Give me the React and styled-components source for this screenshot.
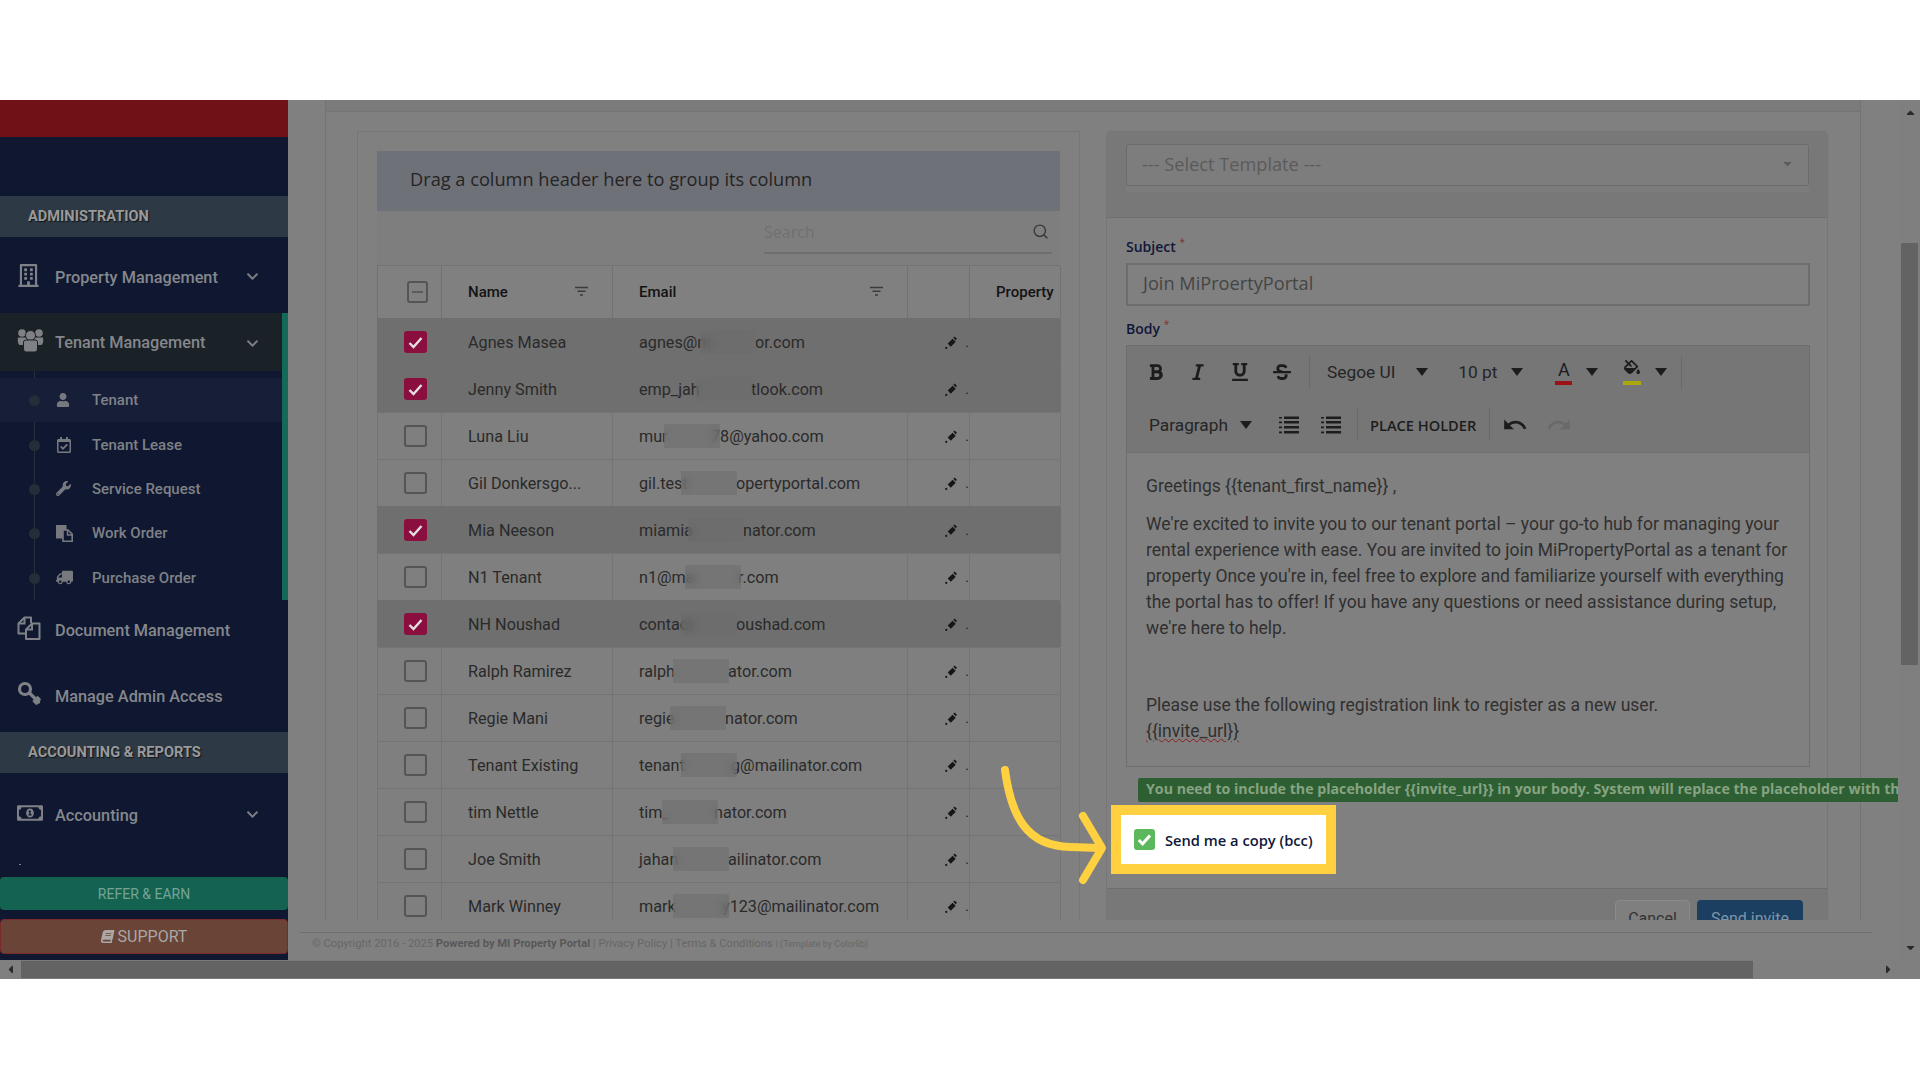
import React from 'react';
import styled, { createGlobalStyle } from 'styled-components';
import {
  FaChevronDown,
  FaRegBuilding,
  FaUser,
  FaRegCalendarCheck,
  FaWrench,
  FaTruck,
  FaRegMoneyBillAlt,
  FaBook,
  FaBold,
  FaItalic,
  FaUnderline,
  FaStrikethrough,
  FaFillDrip,
  FaCaretDown,
  FaCaretUp,
  FaCaretLeft,
  FaCaretRight,
} from 'react-icons/fa';
import { MdUndo, MdRedo } from 'react-icons/md';
import { LuSearch } from 'react-icons/lu';

const people = [
  { name: 'Agnes Masea', start: 'agnes@m', end: 'or.com', left: 61, selected: true },
  { name: 'Jenny Smith', start: 'emp_jah', end: 'tlook.com', left: 57, selected: true },
  { name: 'Luna Liu', start: 'mur', end: '78@yahoo.com', left: 25, back: 9 },
  { name: 'Gil Donkersgo...', start: 'gil.test', end: 'opertyportal.com', left: 42 },
  { name: 'Mia Neeson', start: 'miamia', end: 'nator.com', left: 49, selected: true },
  { name: 'N1 Tenant', start: 'n1@ma', end: 'r.com', left: 46, back: 3 },
  { name: 'NH Noushad', start: 'contact', end: 'oushad.com', left: 42, selected: true },
  { name: 'Ralph Ramirez', start: 'ralph', end: 'ator.com', left: 34 },
  { name: 'Regie Mani', start: 'regie', end: 'nator.com', left: 31 },
  { name: 'Tenant Existing', start: 'tenant', end: 'g@mailinator.com', left: 42, back: 6 },
  { name: 'tim Nettle', start: 'tim_', end: 'nator.com', left: 23, back: 4 },
  { name: 'Joe Smith', start: 'jahan', end: 'ailinator.com', left: 34 },
  { name: 'Mark Winney', start: 'mark', end: 'y123@mailinator.com', left: 34, back: 7 },
];

const FlippedTruck = styled(FaTruck)`
  transform: scaleX(-1);
`;

const DocsIcon = () => (
  <svg width="24" height="24" viewBox="0 0 24 24" fill="none" stroke="#7f8186" strokeWidth="2">
    <path d="M9 17.5 H1.5 V7.5 L7.5 1.5 H14 V7" strokeLinejoin="round" />
    <path d="M7.5 1.5 V7.5 H1.5" />
    <path d="M15 7.5 H22.5 V23 H9 V13.5 Z" strokeLinejoin="round" />
    <path d="M15 7.5 V13.5 H9" />
  </svg>
);

const KeyIcon = () => (
  <svg width="24" height="26" viewBox="0 0 24 26" fill="none" stroke="#7f8186" strokeLinecap="round">
    <circle cx="8" cy="8" r="5.5" strokeWidth="3.2" />
    <path d="M12.5 12 L21.5 21" strokeWidth="3.4" />
    <path d="M17 20 L19.5 22.5 M20.5 16.5 L22.5 18.5" strokeWidth="2.6" />
  </svg>
);

const UsersIcon = () => (
  <svg width="27" height="25" viewBox="0 0 27 25" fill="#7f8186">
    <circle cx="5" cy="5" r="3.8" />
    <circle cx="22" cy="5" r="3.8" />
    <path d="M1 9.5 H26 Q27 15 24.5 17 H2.5 Q0 15 1 9.5 Z" />
    <circle cx="13.5" cy="7.5" r="5" stroke="#1a2127" strokeWidth="1" />
    <path d="M6.5 14 Q6.5 12 9 12 H18 Q20.5 12 20.5 14 V21 Q20.5 24 18 24 H9 Q6.5 24 6.5 21 Z" stroke="#1a2127" strokeWidth="1" />
  </svg>
);

const WorkOrderIcon = () => (
  <svg width="17" height="17" viewBox="0 0 17 17">
    <path d="M0 0 H10.5 V5 H7 V13.5 H0 Z" fill="#77797f" />
    <path d="M7 5 H12 L16.2 9.2 V16.2 H7 Z" fill="#0f1830" stroke="#77797f" strokeWidth="1.6" />
    <path d="M11.5 5 V10 H16" fill="none" stroke="#77797f" strokeWidth="1.4" />
  </svg>
);

const subItems = [
  { label: 'Tenant', icon: <FaUser size={14} />, active: true },
  { label: 'Tenant Lease', icon: <FaRegCalendarCheck size={16} /> },
  { label: 'Service Request', icon: <FaWrench size={15} /> },
  { label: 'Work Order', icon: <WorkOrderIcon /> },
  { label: 'Purchase Order', icon: <FlippedTruck size={17} /> },
];

const App = () => {
  return (
    <Page>
      <GlobalStyle />
      <WhiteBand $height={100} />
      <Frame>
        <Main>
          <Sidebar>
            <RedStrip />
            <SectionTitle $top={59}>ADMINISTRATION</SectionTitle>
            <NavRow $height={76}>
              <NavIcon><FaRegBuilding size={23} /></NavIcon>
              <NavLabel>Property Management</NavLabel>
              <Chevron />
            </NavRow>
            <OpenGroup>
              <OpenHead>
                <NavIcon><UsersIcon /></NavIcon>
                <NavLabel>Tenant Management</NavLabel>
                <Chevron />
              </OpenHead>
              <SubList>
                {subItems.map((item) => (
                  <SubRow key={item.label} $active={item.active}>
                    <SubDot />
                    <SubIcon>{item.icon}</SubIcon>
                    <span>{item.label}</span>
                  </SubRow>
                ))}
              </SubList>
            </OpenGroup>
            <NavRow $height={56}>
              <NavIcon><DocsIcon /></NavIcon>
              <NavLabel>Document Management</NavLabel>
            </NavRow>
            <NavRow $height={76}>
              <NavIcon><KeyIcon /></NavIcon>
              <NavLabel>Manage Admin Access</NavLabel>
            </NavRow>
            <SectionTitle>ACCOUNTING &amp; REPORTS</SectionTitle>
            <NavRow $height={80}>
              <NavIcon><FaRegMoneyBillAlt size={26} /></NavIcon>
              <NavLabel>Accounting</NavLabel>
              <Chevron />
            </NavRow>
            <SideDot />
            <SideButtons>
              <ReferButton>REFER &amp; EARN</ReferButton>
              <SupportButton><TiltedBook size={13} /> SUPPORT</SupportButton>
            </SideButtons>
          </Sidebar>

          <Content>
            <ScrollArea>
              <Card>
                <CardTop />
                <CardBody>
                  <GridPanel>
                    <GroupBar>Drag a column header here to group its column</GroupBar>
                    <SearchRow>
                      <SearchBox>
                        <span>Search</span>
                        <LuSearch size={17} />
                      </SearchBox>
                    </SearchRow>
                    <HeadRow>
                      <HeadCell $check>
                        <HeadCheck><span /></HeadCheck>
                      </HeadCell>
                      <HeadCell>
                        Name
                        <FilterIcon />
                      </HeadCell>
                      <HeadCell>
                        Email
                        <FilterIcon />
                      </HeadCell>
                      <HeadCell />
                      <HeadCell $property>Property</HeadCell>
                    </HeadRow>
                    {people.map((p) => (
                      <DataRow key={p.name} $selected={p.selected}>
                        <CheckCell>
                          <RowCheck $selected={p.selected}>
                            {p.selected && (
                              <svg width="15" height="13" viewBox="0 0 15 13">
                                <path d="M1.5 7 L5.5 11 L13.5 2" fill="none" stroke="#e4e0e2" strokeWidth="2.4" />
                              </svg>
                            )}
                          </RowCheck>
                        </CheckCell>
                        <NameCell>{p.name}</NameCell>
                        <EmailCell>
                          <EmailStart $width={p.left}>{p.start}</EmailStart>
                          <BlurPatch />
                          <EmailEnd $back={p.back || 1}>{p.end}</EmailEnd>
                        </EmailCell>
                        <ActionCell>
                          <PenIcon />
                          <span>.</span>
                        </ActionCell>
                        <EmptyCell />
                      </DataRow>
                    ))}
                  </GridPanel>

                  <FormPanel>
                    <FormTop>
                      <TemplateSelect>
                        <span>--- Select Template ---</span>
                        <FaCaretDown size={13} />
                      </TemplateSelect>
                      <SelectShade />
                    </FormTop>
                    <FormBody>
                      <FieldLabel>Subject <sup>*</sup></FieldLabel>
                      <SubjectInput>Join MiProertyPortal</SubjectInput>
                      <FieldLabel $body>Body <sup>*</sup></FieldLabel>
                      <Editor>
                        <Toolbar>
                          <ToolRow>
                            <ToolIcon $left={20}><FaBold size={18} /></ToolIcon>
                            <ToolIcon $left={24}><FaItalic size={18} /></ToolIcon>
                            <ToolIcon $left={24}><FaUnderline size={18} /></ToolIcon>
                            <ToolIcon $left={24}><FaStrikethrough size={18} /></ToolIcon>
                            <ToolDivider $left={18} />
                            <ToolText $left={17}>Segoe UI</ToolText>
                            <Caret $left={21} />
                            <ToolText $left={30}>10 pt</ToolText>
                            <Caret $left={14} />
                            <ColorTool $left={32}>A</ColorTool>
                            <Caret $left={14} />
                            <FillTool $left={25}><FaFillDrip size={16} /></FillTool>
                            <Caret $left={14} />
                            <ToolDivider $left={14} />
                          </ToolRow>
                          <ToolRow>
                            <ToolText $left={22}>Paragraph</ToolText>
                            <Caret $left={12} />
                            <ListIcon $left={27} />
                            <ListIcon $left={22} />
                            <ToolDivider $left={16} />
                            <PlaceHolder>PLACE HOLDER</PlaceHolder>
                            <ToolDivider $left={13} />
                            <ToolIcon $left={12}><MdUndo size={26} /></ToolIcon>
                            <ToolIcon $left={18} $muted><MdRedo size={26} /></ToolIcon>
                          </ToolRow>
                        </Toolbar>
                        <EditorBody>
                          <p>Greetings {'{{tenant_first_name}}'} ,</p>
                          <p>
                            We're excited to invite you to our tenant portal – your go-to hub for managing your<br />
                            rental experience with ease. You are invited to join MiPropertyPortal as a tenant for<br />
                            property Once you're in, feel free to explore and familiarize yourself with everything<br />
                            the portal has to offer! If you have any questions or need assistance during setup,<br />
                            we're here to help.
                          </p>
                          <p>&nbsp;</p>
                          <p>
                            Please use the following registration link to register as a new user.<br />
                            <Misspelt>{'{{invite_url}}'}</Misspelt>
                          </p>
                        </EditorBody>
                      </Editor>
                      <NoticeBar>
                        You need to include the placeholder {'{{invite_url}}'} in your body. System will replace the placeholder with the registration link.
                      </NoticeBar>
                    </FormBody>
                    <FormFooter>
                      <CancelButton>Cancel</CancelButton>
                      <SendButton>Send invite</SendButton>
                    </FormFooter>
                  </FormPanel>
                </CardBody>
              </Card>
            </ScrollArea>
            <Footer>
              <FooterLine>
                © Copyright 2016 - 2025 <b>Powered by MI Property Portal</b> | Privacy Policy | Terms &amp; Conditions <small>| (Template by Colorlib)</small>
              </FooterLine>
            </Footer>
          </Content>

          <VScroll>
            <FaCaretUp size={13} />
            <VThumb />
            <FaCaretDown size={13} />
          </VScroll>
        </Main>
        <HScroll>
          <HButton><FaCaretLeft size={13} /></HButton>
          <HThumb />
          <HEnd><FaCaretRight size={13} /></HEnd>
        </HScroll>
      </Frame>
      <WhiteBand $height={101} />

      <CalloutArrow width="110" height="125" viewBox="0 0 110 125">
        <path d="M5 5 C11 50 26 81 70 82 L100 83" fill="none" stroke="#ffd040" strokeWidth="8" strokeLinecap="round" />
        <path d="M83 51 L102 83 L83 115" fill="none" stroke="#ffd040" strokeWidth="8" strokeLinecap="round" strokeLinejoin="round" />
      </CalloutArrow>
      <Highlight>
        <GreenCheck>
          <svg width="15" height="13" viewBox="0 0 15 13">
            <path d="M1.8 7 L5.6 10.8 L13 2.4" fill="none" stroke="#fff" strokeWidth="3" />
          </svg>
        </GreenCheck>
        <span>Send me a copy (bcc)</span>
      </Highlight>
    </Page>
  );
};

export default App;

const PenIcon = () => (
  <svg width="16" height="16" viewBox="0 0 16 16" fill="#161616">
    <path d="M8.5 4.3 L12 7.8 L6.5 13.2 L3 9.8 Z" />
    <path d="M10.7 1.8 L13.4 4.5 L12 6 L9.3 3.3 Z" />
    <circle cx="1.4" cy="14.6" r="1.2" />
  </svg>
);

const FilterIcon = () => (
  <FilterSvg width="13" height="12" viewBox="0 0 13 12">
    <path d="M0 0.7 H13 V2.2 H0 Z M2.5 4.5 H10.5 V6 H2.5 Z M5 8.3 H8 V9.8 H5 Z" fill="#3b3b3b" />
  </FilterSvg>
);

const ListIcon = ({ $left }) => (
  <ListSvg $left={$left} width="20" height="18" viewBox="0 0 20 18">
    <path d="M5 0.5 H20 V3 H5 Z M5 5 H20 V7.5 H5 Z M5 10 H20 V12.5 H5 Z M5 15 H20 V17.5 H5 Z" fill="#1c1c1c" />
    <path d="M0 1 H3 V2.6 H0 Z M0 5.6 H3 V7.2 H0 Z M0 10.6 H3 V12.2 H0 Z M0 15.6 H3 V17.2 H0 Z" fill="#1c1c1c" />
  </ListSvg>
);

const Chevron = () => (
  <ChevronWrap><FaChevronDown size={13} /></ChevronWrap>
);

const GlobalStyle = createGlobalStyle`
  html, body {
    margin: 0;
    padding: 0;
    background: #fff;
    overflow: hidden;
  }
  body {
    font-family: Roboto, "Liberation Sans", sans-serif;
  }
`;

const Page = styled.div`
  position: relative;
  width: 1920px;
  height: 1080px;
  display: flex;
  flex-direction: column;
  overflow: hidden;
`;

const WhiteBand = styled.div`
  height: ${(p) => p.$height}px;
  flex: none;
  background: #fff;
`;

const Frame = styled.div`
  flex: 1;
  display: flex;
  flex-direction: column;
  background: #808080;
  min-height: 0;
`;

const Main = styled.div`
  height: 860px;
  display: flex;
`;

const Sidebar = styled.aside`
  width: 288px;
  flex: none;
  display: flex;
  flex-direction: column;
  background: #0f1830;
  color: #85878d;
`;

const RedStrip = styled.div`
  height: 37px;
  background: #6f1116;
`;

const SectionTitle = styled.div`
  height: 41px;
  margin-top: ${(p) => p.$top || 0}px;
  padding: 0 0 2px 28px;
  box-sizing: border-box;
  display: flex;
  align-items: center;
  flex: none;
  background: #2d3945;
  color: #989a9c;
  font-size: 14.6px;
  font-weight: 700;
  text-shadow: 1px 1px 1px #141414;
`;

const NavRow = styled.div`
  height: ${(p) => p.$height}px;
  flex: none;
  display: flex;
  align-items: center;
  position: relative;
  padding-left: 18px;
`;

const NavIcon = styled.span`
  width: 37px;
  flex: none;
  display: flex;
  align-items: center;
  color: #7f8186;

  & > svg:first-child {
    margin-left: -1px;
  }
`;

const NavLabel = styled.span`
  padding-top: 4px;
  font-size: 16.3px;
  font-weight: 500;
  white-space: nowrap;
`;

const ChevronWrap = styled.span`
  position: absolute;
  left: 246px;
  top: 50%;
  margin-top: -5px;
  display: flex;
  color: #7a7c82;
`;

const OpenGroup = styled.div`
  flex: none;
  border-right: 6px solid #136a58;
`;

const OpenHead = styled.div`
  position: relative;
  height: 58px;
  box-sizing: border-box;
  display: flex;
  align-items: center;
  padding: 0 0 4px 18px;
  background: #1a2127;
`;

const SubList = styled.div`
  position: relative;
  padding-top: 7px;
  height: 229px;
  box-sizing: border-box;

  &::before {
    content: '';
    position: absolute;
    left: 34px;
    top: 0;
    bottom: 0;
    width: 1px;
    background: #262f38;
  }
`;

const SubRow = styled.div`
  height: 44.4px;
  display: flex;
  align-items: center;
  position: relative;
  padding-left: 56px;
  background: ${(p) => (p.$active ? '#161e38' : 'transparent')};
  font-size: 15px;
  font-weight: 500;
  color: #7f8187;
`;

const SubDot = styled.i`
  position: absolute;
  left: 29px;
  top: 50%;
  margin-top: -5px;
  width: 11px;
  height: 11px;
  border-radius: 50%;
  background: #232e38;
`;

const SubIcon = styled.span`
  width: 36px;
  display: flex;
  align-items: center;
  color: #77797f;
`;

const SideDot = styled.i`
  width: 2px;
  height: 1px;
  margin: 11px 0 0 19px;
  background: #7f8186;
`;

const SideButtons = styled.div`
  margin-top: auto;
  padding-bottom: 6px;
  display: flex;
  flex-direction: column;
  gap: 9px;
`;

const ReferButton = styled.div`
  height: 33px;
  display: flex;
  align-items: center;
  justify-content: center;
  background: #136350;
  border-radius: 4px;
  color: #76a398;
  font-size: 14px;
`;

const SupportButton = styled.div`
  height: 35px;
  box-sizing: border-box;
  display: flex;
  align-items: center;
  justify-content: center;
  gap: 4px;
  background: #694437;
  border: 1px solid #7a2a2a;
  border-radius: 4px;
  color: #aaa7a5;
  font-size: 16px;
`;

const TiltedBook = styled(FaBook)`
  transform: skewX(-12deg);
`;

const Content = styled.main`
  flex: 1;
  min-width: 0;
  display: flex;
  flex-direction: column;
`;

const ScrollArea = styled.div`
  height: 820px;
  flex: none;
  overflow: hidden;
  padding-left: 37px;
`;

const Card = styled.div`
  width: 1536px;
  box-sizing: border-box;
  border-left: 1px solid #737373;
  border-right: 1px solid #737373;
  height: 100%;
`;

const CardTop = styled.div`
  height: 11px;
  background: #7b7b7b;
  border-bottom: 1px solid #747474;
`;

const CardBody = styled.div`
  display: flex;
  align-items: flex-start;
  gap: 26px;
  padding: 19px 0 0 31px;
`;

const GridPanel = styled.section`
  width: 723px;
  flex: none;
  box-sizing: border-box;
  padding: 19px 19px 0;
  border: 1px solid #767676;
`;

const GroupBar = styled.div`
  height: 60px;
  box-sizing: border-box;
  display: flex;
  align-items: center;
  padding: 0 0 5px 33px;
  background: #6f7178;
  font-family: "Open Sans", sans-serif;
  font-size: 18.2px;
  color: #242424;
`;

const SearchRow = styled.div`
  height: 54px;
  display: flex;
  justify-content: flex-end;
  box-sizing: border-box;
  padding-right: 8px;
  background: #7e7e7e;
`;

const SearchBox = styled.div`
  width: 288px;
  height: 43px;
  box-sizing: border-box;
  display: flex;
  align-items: center;
  justify-content: space-between;
  padding-right: 3px;
  border-bottom: 2px solid #6e6e6e;
  font-family: "Open Sans", sans-serif;
  font-size: 16px;
  color: #707070;

  svg {
    color: #3a3a3a;
  }
`;

const columns = '64px 171px 295px 62px 92px';

const HeadRow = styled.div`
  display: grid;
  grid-template-columns: ${columns};
  height: 53px;
  border-top: 1px solid #727272;
  box-sizing: border-box;
`;

const HeadCell = styled.div`
  display: flex;
  align-items: center;
  justify-content: space-between;
  padding: ${(p) => (p.$check ? '0 0 0 29px' : p.$property ? '0 0 0 26px' : '0 24px 0 26px')};
  border-left: 1px solid #727272;
  font-size: 15px;
  font-weight: 500;
  color: #131313;
  white-space: nowrap;
  overflow: hidden;

  &:last-child {
    border-right: 1px solid #727272;
  }
`;

const FilterSvg = styled.svg`
  flex: none;
`;

const HeadCheck = styled.div`
  width: 21px;
  height: 22px;
  box-sizing: border-box;
  border: 2px solid #555;
  border-radius: 3px;
  display: flex;
  align-items: center;
  justify-content: center;

  span {
    width: 11px;
    height: 2px;
    background: #5a5a5a;
  }
`;

const DataRow = styled.div`
  display: grid;
  grid-template-columns: ${columns};
  height: 47px;
  box-sizing: border-box;
  background: ${(p) => (p.$selected ? '#6f6f6f' : '#7f7f7f')};
  border-top: 1px solid ${(p) => (p.$selected ? '#6f6f6f' : '#747474')};

  & > div {
    border-left: 1px solid ${(p) => (p.$selected ? '#6f6f6f' : '#747474')};
  }

  & > div:last-child {
    border-right: 1px solid ${(p) => (p.$selected ? '#6f6f6f' : '#747474')};
  }
`;

const CheckCell = styled.div`
  display: flex;
  align-items: center;
  padding-left: 26px;
`;

const RowCheck = styled.div`
  width: 23px;
  height: 22px;
  box-sizing: border-box;
  border-radius: 3px;
  display: flex;
  align-items: center;
  justify-content: center;
  background: ${(p) => (p.$selected ? '#8a0f3e' : 'transparent')};
  border: ${(p) => (p.$selected ? 'none' : '2px solid #555')};
`;

const NameCell = styled.div`
  display: flex;
  align-items: center;
  padding-left: 26px;
  font-size: 16.2px;
  color: #2a2a2a;
  white-space: nowrap;
`;

const EmailCell = styled.div`
  display: flex;
  align-items: center;
  padding-left: 26px;
  font-size: 16.2px;
  color: #2a2a2a;
  white-space: nowrap;
  overflow: hidden;
`;

const EmailStart = styled.span`
  width: ${(p) => p.$width}px;
  flex: none;
`;

const BlurPatch = styled.span`
  position: relative;
  z-index: 1;
  width: 56px;
  height: 24px;
  flex: none;
  backdrop-filter: blur(5px);
  background: rgba(108, 108, 108, 0.5);
`;

const EmailEnd = styled.span`
  margin-left: ${(p) => -p.$back}px;
`;

const ActionCell = styled.div`
  display: flex;
  align-items: center;
  padding-left: 37px;
  gap: 6px;
  color: #222;
  font-size: 14px;
`;

const EmptyCell = styled.div``;

const FormPanel = styled.section`
  width: 722px;
  flex: none;
  border: 1px solid #767676;
  border-radius: 4px 4px 0 0;
  box-sizing: border-box;
`;

const FormTop = styled.div`
  height: 86px;
  box-sizing: border-box;
  padding: 12px 18px 0 19px;
  background: #787878;
  border-bottom: 1px solid #6e6e6e;
`;

const TemplateSelect = styled.div`
  height: 42px;
  box-sizing: border-box;
  display: flex;
  align-items: center;
  justify-content: space-between;
  padding: 0 14px 3px 15px;
  background: #7d7d7d;
  border: 1px solid #6b6b6b;
  border-radius: 3px;
  font-family: "Open Sans", sans-serif;
  font-size: 18.2px;
  color: #5b5b5b;
`;

const SelectShade = styled.div`
  height: 6px;
  background: #7c7c7c;
`;

const FormBody = styled.div`
  padding: 0 0 0 19px;
  height: 670px;
  box-sizing: border-box;
  position: relative;
`;

const FieldLabel = styled.div`
  height: ${(p) => (p.$body ? '39px' : '45px')};
  box-sizing: border-box;
  padding-top: ${(p) => (p.$body ? '13px' : '19px')};
  font-family: "Open Sans", sans-serif;
  font-size: 14px;
  font-weight: 600;
  color: #10173a;

  sup {
    color: #7c3030;
    font-size: 10px;
    font-weight: 400;
    line-height: 0;
  }
`;

const SubjectInput = styled.div`
  width: 684px;
  height: 43px;
  box-sizing: border-box;
  display: flex;
  align-items: center;
  padding: 0 0 4px 15px;
  border: 2px solid #6e6e6e;
  font-family: "Open Sans", sans-serif;
  font-size: 18.2px;
  color: #454545;
`;

const Editor = styled.div`
  width: 684px;
  box-sizing: border-box;
  border: 1px solid #6e6e6e;
`;

const Toolbar = styled.div`
  height: 107px;
  box-sizing: border-box;
  background: #767676;
  border-bottom: 1px solid #6f6f6f;
  color: #1c1c1c;
`;

const ToolRow = styled.div`
  height: 52.5px;
  display: flex;
  align-items: center;
`;

const ToolIcon = styled.span`
  margin-left: ${(p) => p.$left}px;
  display: flex;
  color: ${(p) => (p.$muted ? '#696969' : '#1c1c1c')};
`;

const ToolDivider = styled.i`
  margin-left: ${(p) => p.$left}px;
  width: 1px;
  height: 33px;
  background: #696969;
`;

const ToolText = styled.span`
  margin-left: ${(p) => p.$left}px;
  font-size: 17.3px;
  color: #252525;
  white-space: nowrap;
`;

const Caret = styled.i`
  margin-left: ${(p) => p.$left}px;
  width: 0;
  height: 0;
  border-left: 6.5px solid transparent;
  border-right: 6.5px solid transparent;
  border-top: 8px solid #1c1c1c;
`;

const ColorTool = styled.span`
  margin-left: ${(p) => p.$left}px;
  width: 17px;
  height: 26px;
  box-sizing: border-box;
  border-bottom: 4px solid #9c1116;
  text-align: center;
  font-size: 18px;
  line-height: 21px;
`;

const FillTool = styled.span`
  margin-left: ${(p) => p.$left}px;
  width: 18px;
  height: 26px;
  box-sizing: border-box;
  border-bottom: 4px solid #a9a80f;
  display: flex;
  justify-content: center;
  overflow: hidden;
`;

const ListSvg = styled.svg`
  margin-left: ${(p) => p.$left}px;
`;

const PlaceHolder = styled.span`
  margin-left: 12px;
  font-family: "Open Sans", sans-serif;
  font-size: 14.6px;
  font-weight: 600;
  color: #1c1c1c;
  white-space: nowrap;
`;

const EditorBody = styled.div`
  height: 313px;
  box-sizing: border-box;
  padding: 21px 19px 0;
  font-size: 17.5px;
  line-height: 25.9px;
  color: #303030;
  white-space: nowrap;

  p {
    margin: 0 0 12.5px;
  }
`;

const Misspelt = styled.span`
  text-decoration: underline wavy #8c1b1b;
  text-decoration-thickness: 1px;
`;

const NoticeBar = styled.div`
  margin: 11px 0 0 12px;
  width: 760px;
  height: 24px;
  box-sizing: border-box;
  display: flex;
  align-items: center;
  padding: 0 0 3px 8px;
  background: #2e5f33;
  border-radius: 2px 0 0 2px;
  font-family: "Open Sans", sans-serif;
  font-size: 14.2px;
  font-weight: 700;
  color: #87a382;
  white-space: nowrap;
  overflow: hidden;
`;

const FormFooter = styled.div`
  height: 60px;
  box-sizing: border-box;
  display: flex;
  justify-content: flex-end;
  gap: 7px;
  padding: 11px 24px 0 0;
  border-top: 1px solid #6e6e6e;
  background: #787878;
`;

const CancelButton = styled.div`
  width: 75px;
  height: 36px;
  box-sizing: border-box;
  border: 1px solid #8a8a8a;
  border-radius: 4px;
  display: flex;
  align-items: center;
  justify-content: center;
  font-size: 16px;
  color: #333;
  background: #7f7f7f;
`;

const SendButton = styled.div`
  width: 106px;
  height: 36px;
  border-radius: 4px;
  display: flex;
  align-items: center;
  justify-content: center;
  font-size: 16px;
  color: #7f94a8;
  background: #1a3f60;
`;

const Footer = styled.footer`
  flex: 1;
  display: flex;
  padding: 12px 0 0 12px;
  box-sizing: border-box;
`;

const FooterLine = styled.div`
  width: 1572px;
  height: 28px;
  box-sizing: border-box;
  border-top: 1px solid #6f6f6f;
  padding: 4px 0 0 12px;
  font-size: 11.2px;
  color: #676767;

  b {
    font-weight: 700;
    color: #585858;
  }

  small {
    font-size: 9px;
  }
`;

const VScroll = styled.div`
  width: 20px;
  flex: none;
  box-sizing: border-box;
  padding: 6px 0;
  display: flex;
  flex-direction: column;
  align-items: center;
  justify-content: space-between;
  color: #2a2a2a;
  background: #7f7f7f;
  position: relative;
`;

const VThumb = styled.div`
  position: absolute;
  top: 143px;
  left: 1px;
  width: 17px;
  height: 422px;
  background: #636363;
`;

const HScroll = styled.div`
  height: 19px;
  flex: none;
  display: flex;
  background: #7a7a7a;
  color: #2a2a2a;
`;

const HButton = styled.div`
  width: 21px;
  flex: none;
  display: flex;
  align-items: center;
  justify-content: center;
  background: #808080;
`;

const HThumb = styled.div`
  width: 1732px;
  flex: none;
  margin: 1px 0;
  background: #636363;
`;

const HEnd = styled.div`
  flex: 1;
  display: flex;
  align-items: center;
  justify-content: flex-end;
  padding-right: 25px;
  background: #7f7f7f;
`;

const CalloutArrow = styled.svg`
  position: absolute;
  left: 1000px;
  top: 765px;
`;

const Highlight = styled.div`
  position: absolute;
  left: 1111px;
  top: 805px;
  width: 225px;
  height: 69px;
  box-sizing: border-box;
  border: 10px solid #ffd040;
  background: #fff;
  display: flex;
  align-items: center;
  padding-left: 13px;
  gap: 10px;
  font-family: "Open Sans", sans-serif;
  font-size: 14.7px;
  font-weight: 600;
  color: #10173a;
  white-space: nowrap;
`;

const GreenCheck = styled.span`
  width: 21px;
  height: 21px;
  flex: none;
  border-radius: 3px;
  background: #5cb85c;
  display: flex;
  align-items: center;
  justify-content: center;
`;
